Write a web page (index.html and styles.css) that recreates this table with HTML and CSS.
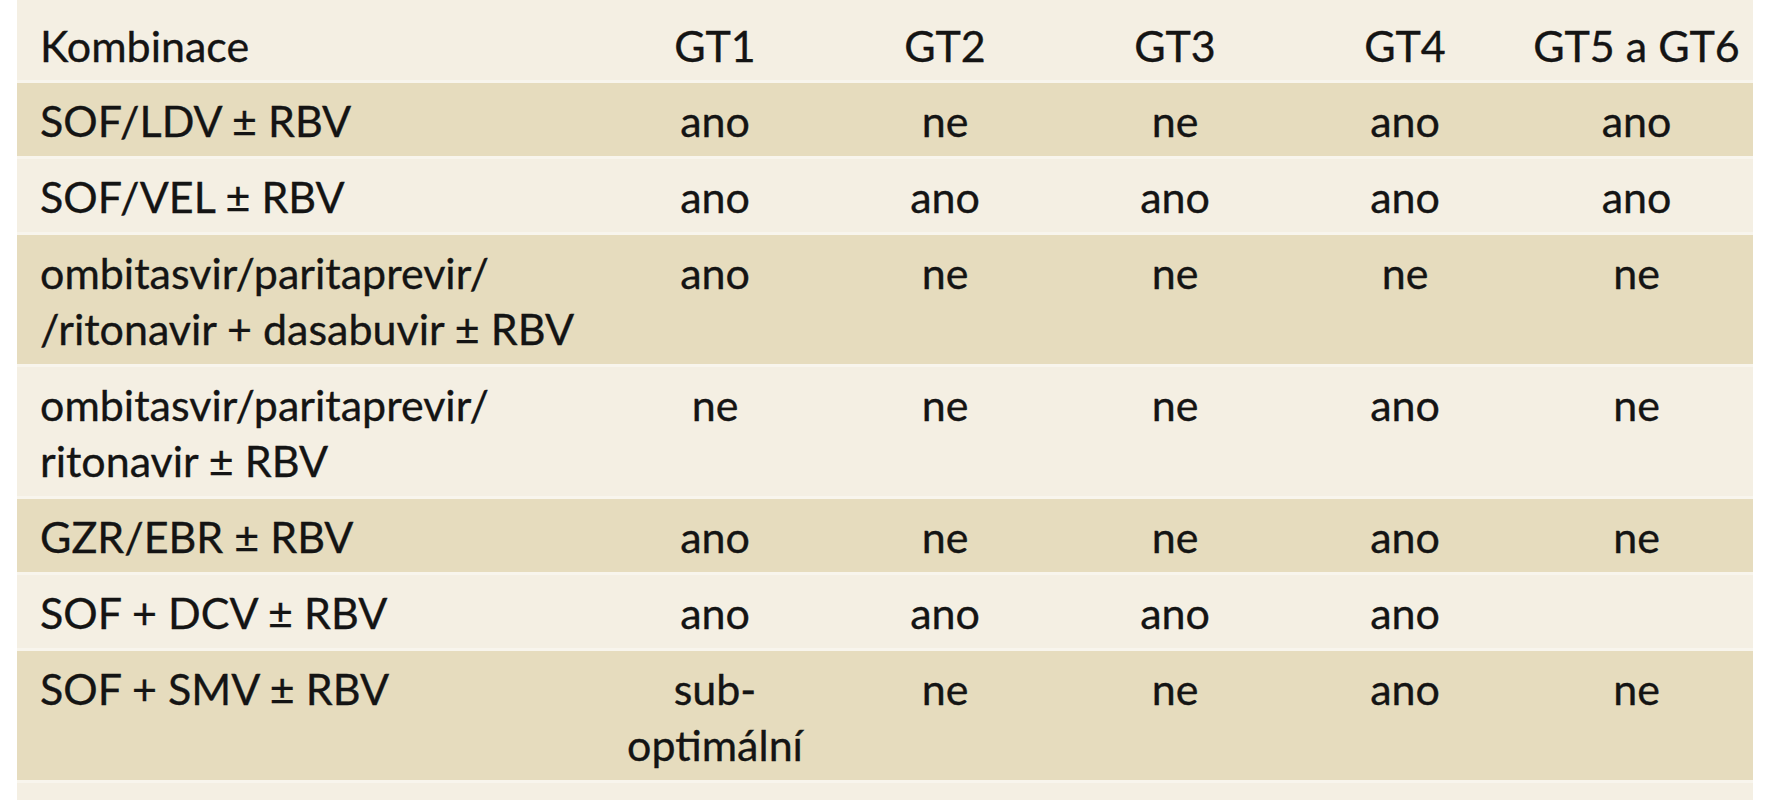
FILE: index.html
```html
<!DOCTYPE html>
<html lang="cs">
<head>
<meta charset="utf-8">
<title>Kombinace</title>
<link rel="stylesheet" href="styles.css">
</head>
<body>
<div class="wrap">
<table class="tbl">
<colgroup>
<col class="c-name"><col class="c-gt"><col class="c-gt"><col class="c-gt"><col class="c-gt"><col class="c-last">
</colgroup>
<thead>
<tr class="head">
<th class="name">Kombinace</th><th>GT1</th><th>GT2</th><th>GT3</th><th>GT4</th><th>GT5 a GT6</th>
</tr>
</thead>
<tbody>
<tr class="dark"><td class="name">SOF/LDV ± RBV</td><td>ano</td><td>ne</td><td>ne</td><td>ano</td><td>ano</td></tr>
<tr class="light"><td class="name">SOF/VEL ± RBV</td><td>ano</td><td>ano</td><td>ano</td><td>ano</td><td>ano</td></tr>
<tr class="dark"><td class="name">ombitasvir/paritaprevir/<br>/ritonavir + dasabuvir ± RBV</td><td>ano</td><td>ne</td><td>ne</td><td>ne</td><td>ne</td></tr>
<tr class="light"><td class="name">ombitasvir/paritaprevir/<br>ritonavir ± RBV</td><td>ne</td><td>ne</td><td>ne</td><td>ano</td><td>ne</td></tr>
<tr class="dark"><td class="name">GZR/EBR ± RBV</td><td>ano</td><td>ne</td><td>ne</td><td>ano</td><td>ne</td></tr>
<tr class="light"><td class="name">SOF + DCV ± RBV</td><td>ano</td><td>ano</td><td>ano</td><td>ano</td><td></td></tr>
<tr class="dark"><td class="name">SOF + SMV ± RBV</td><td>sub-<br>optimální</td><td>ne</td><td>ne</td><td>ano</td><td>ne</td></tr>
<tr class="light tail"><td class="name"></td><td></td><td></td><td></td><td></td><td></td></tr>
</tbody>
</table>
</div>
</body>
</html>
```

FILE: styles.css
```css
html, body {
  margin: 0;
  padding: 0;
  background: #ffffff;
}

.wrap {
  padding-left: 17px;
}

.tbl {
  width: 1736px;
  table-layout: fixed;
  border-collapse: collapse;
  font-family: Lato, "Liberation Sans", sans-serif;
  font-size: 43px;
  line-height: 56px;
  color: #141414;
  -webkit-text-stroke: 0.35px #141414;
}

.c-name { width: 583px; }
.c-gt { width: 230px; }
.c-last { width: 233px; }

.tbl th,
.tbl td {
  font-weight: normal;
  text-align: center;
  vertical-align: top;
  padding: 10px 0 7px 0;
  border-bottom: 3px solid #f8f5ed;
  white-space: nowrap;
}

.tbl .name {
  text-align: left;
  padding-left: 23px;
}

.head th {
  padding-top: 18px;
  padding-bottom: 6px;
  background: #f4efe3;
}

.dark td { background: #e6dcbe; }
.light td { background: #f4efe3; }

.tail td {
  height: 30px;
  border-bottom: 0;
}
```
